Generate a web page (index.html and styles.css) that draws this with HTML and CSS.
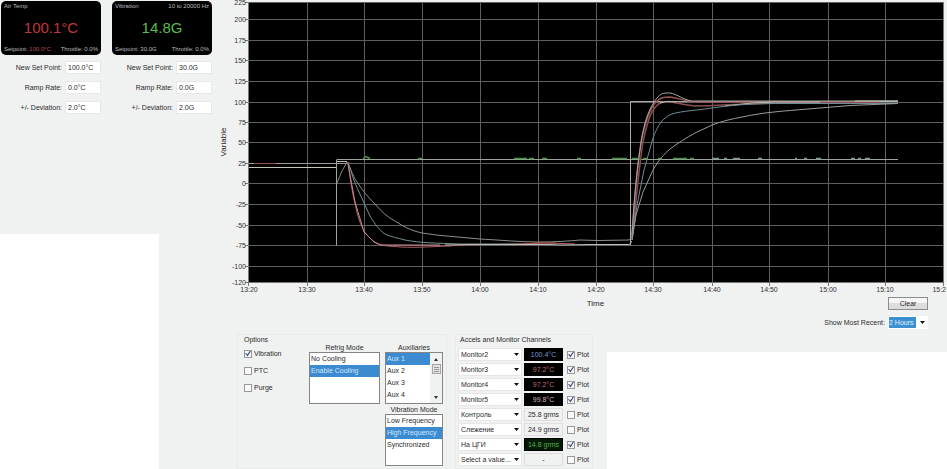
FILE: index.html
```html
<!DOCTYPE html>
<html lang="en">
<head>
<meta charset="utf-8">
<title>Chamber monitor</title>
<link rel="stylesheet" href="styles.css">
</head>
<body>
<main class="monitor">
  <div class="top">
    <aside class="readouts">
      <section class="readout">
        <div class="display display-red">
          <div class="line"><span>Air Temp</span></div>
          <div class="value">100.1°C</div>
          <div class="line"><span>Setpoint: <em>100.0°C</em></span><span>Throttle: 0.0%</span></div>
        </div>
        <div class="field"><label for="t1">New Set Point:</label><input id="t1" value="100.0°C"></div>
        <div class="field"><label for="t2">Ramp Rate:</label><input id="t2" value="0.0°C"></div>
        <div class="field"><label for="t3">+/- Deviation:</label><input id="t3" value="2.0°C"></div>
      </section>
      <section class="readout">
        <div class="display display-green">
          <div class="line"><span>Vibration</span><span>10 to 20000 Hz</span></div>
          <div class="value">14.8G</div>
          <div class="line"><span>Setpoint: 30.0G</span><span>Throttle: 0.0%</span></div>
        </div>
        <div class="field"><label for="v1">New Set Point:</label><input id="v1" value="30.0G"></div>
        <div class="field"><label for="v2">Ramp Rate:</label><input id="v2" value="0.0G"></div>
        <div class="field"><label for="v3">+/- Deviation:</label><input id="v3" value="2.0G"></div>
      </section>
    </aside>
    <section class="trend">
      <svg class="chart" viewBox="217 0 730 294" role="img" aria-label="Variable over time">
        <rect x="249" y="2" width="694" height="280" fill="#000"/>
        <path class="grid" d="M249 2.5H943M249 19.5H943M249 40.5H943M249 60.5H943M249 81.5H943M249 102.5H943M249 122.5H943M249 142.5H943M249 163.5H943M249 183.5H943M249 204.5H943M249 225.5H943M249 245.5H943M249 266.5H943"/>
        <path class="grid" d="M307.500 2V282M364.500 2V282M422.500 2V282M480.500 2V282M538.500 2V282M596.500 2V282M653.500 2V282M712.500 2V282M769.500 2V282M828.500 2V282M885.500 2V282"/>
        <path class="axis" d="M248.500 2V282.500H943.500V2"/>
        <path class="axis" d="M245 2.500h4M245 19.500h4M245 40.500h4M245 60.500h4M245 81.500h4M245 102.500h4M245 122.500h4M245 142.500h4M245 163.500h4M245 183.500h4M245 204.500h4M245 225.500h4M245 245.500h4M245 266.500h4M245 282.500h4M248.500 282v4M307.500 282v4M364.500 282v4M422.500 282v4M480.500 282v4M538.500 282v4M596.500 282v4M653.500 282v4M712.500 282v4M769.500 282v4M828.500 282v4M885.500 282v4M943.500 282v4"/>
        <path class="trace" stroke="#a49a98" d="M249 163.500H347"/>
        <path class="trace" stroke="#8d5550" d="M254 163.500H276"/>
        <path class="trace" stroke="#c4c6b4" d="M249 167.500H336.500V161.500H347"/>
        <path class="trace" stroke="#9ba59e" d="M336.500 160V245.500M336.500 159.500H898"/>
        <path class="trace" stroke="#7d8876" d="M337 183L342 171L347 162"/>
        <path class="trace" stroke="#8c8e8e" d="M347 162C350 166 352 175 357 182C363 191 368 197 375 204C381 211 387 217 395 221C404 227 412 231 422 233C440 236 460 237 480 239C500 240 520 242 538 242C555 242 570 241 580 240L598 240.500L629 240Q632 239 632 235"/>
        <path class="trace" stroke="#71918b" d="M348 162C352 174 354 182 359 192L370 216C375 224 379 230 385 234C391 237 398 238 405 240C420 243 435 243 460 244H540"/>
        <path class="trace" stroke="#b35e66" d="M348 162C350 178 352 192 356 208C358 218 361 225 364 231C368 237 372 240 376 243C380 246 390 246 400 247C420 248 440 246 450 246C465 244 480 245 520 244L545 243L575 244"/>
        <path class="trace" stroke="#c98a91" d="M348 164L355 202L364 232L374 242L381 245H440"/>
        <path class="trace" stroke="#b9bcb9" d="M445 245L470 244.500H550L560 245L590 244.500H629Q631 244 631.500 241"/>
        <path class="trace" stroke="#a65550" d="M534 243H556"/>
        <path class="trace" stroke="#a9acab" d="M630.500 245V101.500H898"/>
        <path class="trace wide" stroke="#985450" d="M632 235C634 205 637 169 641 142C645 122 649 111 655 103C660 97 665 97 670 97C680 98 684 102 700 102H880"/>
        <path class="trace wide" stroke="#8a4f4d" d="M632 240C635 212 638 174 643 142C648 118 652 108 660 103C670 99 678 105 695 106C720 106 745 103 790 103H882"/>
        <path class="trace" stroke="#a7a8a9" d="M632 235C634 205 636 175 640 150C643 128 646 115 654 102C658 96 661 93 666 93C676 92 680 99 692 101H898"/>
        <path class="trace" stroke="#bfc3b2" d="M660 103Q667 100 676 102M725 106L752 103L775 102H820M855 101H898"/>
        <path class="trace" stroke="#6e8b98" d="M632 240L637 205L644 170L653 138C658 125 662 118 672 114C681 111 700 110 712 108C730 105 750 104 770 103.500H898"/>
        <path class="trace" stroke="#9a9c9b" d="M632 240L636 215L643 192L653 170C658 161 664 154 670 149C678 143 686 138 695 133L712 125C722 121 732 119 742 117C765 112 785 111 808 109L850 105.500L898 103.500"/>
        <path class="signal" d="M363 158.500l3 -2l4 2M418 158.500h4M514 158.500h13M529 158.500h5M542 158.500h5M577 158.500h4M612 158.500h15M632 158.500h6M643 158.500h5M658 158.500h4M673 158.500h14M690 158.500h4"/>
        <path class="signal pale" d="M712 158.500h7M724 158.500h3M733 158.500h7M758 158.500h4M795 158.500h2M804 158.500h3M816 158.500h5M851 158.500h4M858 158.500h3M865 158.500h5"/>
        <g class="ticks" text-anchor="end">
          <text x="246" y="5">225</text><text x="246" y="22">200</text><text x="246" y="43">175</text><text x="246" y="63">150</text><text x="246" y="84">125</text><text x="246" y="105">100</text><text x="246" y="125">75</text><text x="246" y="145">50</text><text x="246" y="166">25</text><text x="246" y="186">0</text><text x="246" y="207">-25</text><text x="246" y="228">-50</text><text x="246" y="248">-75</text><text x="246" y="269">-100</text><text x="246" y="285">-120</text>
        </g>
        <g class="ticks" text-anchor="middle">
          <text x="249" y="292">13:20</text><text x="307" y="292">13:30</text><text x="364" y="292">13:40</text><text x="422" y="292">13:50</text><text x="480" y="292">14:00</text><text x="538" y="292">14:10</text><text x="596" y="292">14:20</text><text x="653" y="292">14:30</text><text x="712" y="292">14:40</text><text x="769" y="292">14:50</text><text x="828" y="292">15:00</text><text x="885" y="292">15:10</text><text x="946" y="292" text-anchor="end">15:2</text>
        </g>
        <text class="axis-title" transform="translate(226 142) rotate(-90)" text-anchor="middle">Variable</text>
      </svg>
      <div class="under">
        <span class="time">Time</span>
        <button class="clear" type="button">Clear</button>
      </div>
      <div class="recent">
        <label for="span">Show Most Recent:</label>
        <span class="combo range"><select id="span"><option>2 Hours</option></select></span>
      </div>
    </section>
  </div>

  <div class="panels">
    <fieldset class="options">
      <legend>Options</legend>
      <div class="option-columns">
        <div class="checks">
          <label><input type="checkbox" checked>Vibration</label>
          <label><input type="checkbox">PTC</label>
          <label><input type="checkbox">Purge</label>
        </div>
        <div class="lists">
          <label for="refrig">Refrig Mode</label>
          <select id="refrig" class="list" size="4"><option>No Cooling</option><option selected>Enable Cooling</option></select>
        </div>
        <div class="lists">
          <label for="aux">Auxiliaries</label>
          <div class="scroller">
            <select id="aux" class="list" size="4"><option selected>Aux 1</option><option>Aux 2</option><option>Aux 3</option><option>Aux 4</option></select>
            <svg class="scroll" viewBox="0 0 12 50" aria-hidden="true"><rect width="12" height="50" fill="#f0f1f1"/><path d="M4 8L6 5L8 8ZM4 43L6 46L8 43Z" fill="#333"/><rect x="2.500" y="11.500" width="8" height="9" fill="#e3e3e3" stroke="#a6a6a6"/><path d="M4 14.500h5M4 16.500h5M4 18.500h5" stroke="#999"/></svg>
          </div>
          <label for="mode">Vibration Mode</label>
          <select id="mode" class="list" size="4"><option>Low Frequency</option><option selected>High Frequency</option><option>Synchronized</option></select>
        </div>
      </div>
    </fieldset>
    <fieldset class="channels">
      <legend>Accels and Monitor Channels</legend>
      <div class="channel"><span class="combo"><select aria-label="Channel 1"><option>Monitor2</option></select></span><output class="lit blue">100.4°C</output><label><input type="checkbox" checked>Plot</label></div>
      <div class="channel"><span class="combo"><select aria-label="Channel 2"><option>Monitor3</option></select></span><output class="lit red">97.2°C</output><label><input type="checkbox" checked>Plot</label></div>
      <div class="channel"><span class="combo"><select aria-label="Channel 3"><option>Monitor4</option></select></span><output class="lit red">97.2°C</output><label><input type="checkbox" checked>Plot</label></div>
      <div class="channel"><span class="combo"><select aria-label="Channel 4"><option>Monitor5</option></select></span><output class="lit pink">99.8°C</output><label><input type="checkbox" checked>Plot</label></div>
      <div class="channel"><span class="combo"><select aria-label="Channel 5"><option>Контроль</option></select></span><output>25.8 grms</output><label><input type="checkbox">Plot</label></div>
      <div class="channel"><span class="combo"><select aria-label="Channel 6"><option>Слежение</option></select></span><output>24.9 grms</output><label><input type="checkbox">Plot</label></div>
      <div class="channel"><span class="combo"><select aria-label="Channel 7"><option>На ЦГИ</option></select></span><output class="lit green">14.8 grms</output><label><input type="checkbox" checked>Plot</label></div>
      <div class="channel"><span class="combo"><select aria-label="Channel 8"><option>Select a value...</option></select></span><output>-</output><label><input type="checkbox">Plot</label></div>
    </fieldset>
  </div>
</main>
</body>
</html>
```
FILE: styles.css
```css
* { box-sizing: border-box; }

body {
  margin: 0;
  min-height: 100vh;
  font: 7px/9px "Liberation Sans", Arial, sans-serif;
  color: #2b2b2b;
  background:
    linear-gradient(#fff, #fff) 0 234px / 159px 100% no-repeat,
    linear-gradient(#fff, #fff) 607px 352px / 100% 100% no-repeat,
    #f0f1f1;
}

input, select, button, output { font: inherit; color: inherit; }
em { font-style: normal; }

.top { display: flex; }
.readouts { display: flex; gap: 11px; flex: none; width: 217px; padding: 1px 5px 0 1px; }
.readout { flex: 1; }

.display {
  display: flex;
  flex-direction: column;
  justify-content: space-between;
  height: 54px;
  margin-bottom: 6px;
  padding: 1px 3px;
  border-radius: 5px;
  background: #000;
  color: #bdbdbd;
  font-size: 6px;
}
.line { display: flex; justify-content: space-between; white-space: nowrap; }
.line em { color: #b3524f; }
.value { text-align: center; font-size: 15px; line-height: 18px; }
.display-red .value { color: #c23836; }
.display-green .value { color: #5abb4e; }

.field { display: flex; align-items: center; justify-content: flex-end; gap: 3px; margin-bottom: 7px; }
.field input {
  width: 36px;
  height: 13px;
  padding: 0 2px;
  border: 1px solid #e8e8e8;
  background: #fff;
}

.trend { flex: 1; min-width: 0; }
.chart { display: block; width: 100%; }
.grid { fill: none; stroke: #5f5f5f; }
.axis { fill: none; stroke: #777; }
.trace { fill: none; stroke-width: 1; }
.wide { stroke-width: 1.500; }
.signal { fill: none; stroke: #4c9248; stroke-width: 1.500; }
.pale { stroke: #7f9a8b; }
.ticks { font-size: 7px; fill: #333; }
.axis-title { font-size: 8px; fill: #222; }

.under { display: grid; grid-template-columns: 1fr auto 1fr; align-items: center; padding: 3px 19px 0 46px; }
.time { grid-column: 2; font-size: 8px; }
.clear {
  justify-self: end;
  width: 40px;
  height: 13px;
  padding: 0;
  border: 1px solid #8c8c8c;
  background: linear-gradient(#f6f6f6 50%, #dcdcdc 50%);
}
.recent { display: flex; justify-content: flex-end; align-items: center; gap: 3px; padding: 6px 19px 5px 0; }

.combo { position: relative; display: block; height: 13px; background: #fff; }
.combo::after {
  content: "";
  position: absolute;
  right: 3px;
  top: 5px;
  width: 5px;
  height: 3px;
  background: #111;
  clip-path: polygon(0 0, 100% 0, 50% 100%);
  pointer-events: none;
}
.combo select {
  appearance: none;
  display: block;
  width: 100%;
  height: 100%;
  padding: 0 2px;
  border: 1px solid #e6e6e6;
  border-radius: 0;
  background: none;
}
.range { width: 40px; padding: 1px 12px 1px 1px; }
.range select { padding: 0; border: 0; background: #3c8fd1; color: #e4f2ff; }

.panels { display: flex; gap: 8px; padding-left: 237px; }
fieldset { margin: 0; padding: 0; border: 1px solid #e9eaea; min-width: 0; }
legend { float: left; width: 100%; padding: 0; }

.options { width: 210px; padding: 0 3px 0 6px; }
.options legend { height: 8px; }
.option-columns { display: grid; grid-template-columns: 60px 71px 58px; column-gap: 5px; clear: both; }
.checks { display: flex; flex-direction: column; gap: 8px; padding-top: 6px; }
.checks label, .channel label { display: flex; align-items: center; gap: 2px; }
.lists { display: flex; flex-direction: column; }
.lists label { text-align: center; line-height: 9px; }
.list {
  appearance: none;
  display: block;
  width: 100%;
  height: 52px;
  padding: 0;
  overflow: hidden;
  scrollbar-width: none;
  border: 1px solid #858585;
  border-radius: 0;
  background: #fff;
}
.list option { min-height: 0; height: 12px; padding: 2px 1px 0; line-height: 9px; }
.list option:checked { background: linear-gradient(#3c8ad0, #3c8ad0); color: #cfe9ff; }
.scroller { display: flex; height: 52px; margin-bottom: 1px; border: 1px solid #858585; }
.scroller .list { flex: 1; min-width: 0; height: 50px; border: 0; }
.scroll { display: block; flex: none; width: 12px; height: 50px; }

input[type="checkbox"] {
  appearance: none;
  display: grid;
  place-items: center;
  flex: none;
  width: 8px;
  height: 8px;
  margin: 0;
  border: 1px solid #999;
  background: #f8f8f8;
}
input[type="checkbox"]:checked::before {
  content: "";
  width: 6px;
  height: 6px;
  background: #3f4c80;
  clip-path: polygon(0 45%, 18% 40%, 38% 68%, 85% 0, 100% 10%, 42% 100%);
}

.channels { width: 138px; padding: 0 2px; }
.channels legend { height: 13px; padding-left: 2px; }
.channel { display: grid; grid-template-columns: 64px 39px 1fr; gap: 2px; align-items: center; margin-bottom: 2px; clear: both; }
.channel label { padding-left: 2px; }
.channel output { height: 13px; border: 1px solid #dedede; text-align: center; line-height: 12px; white-space: nowrap; }
.channel .lit { border-color: #000; background: #000; }
.channel .blue { color: #6f9ed0; }
.channel .red { color: #b96e6c; }
.channel .pink { color: #cdb4b8; }
.channel .green { color: #5cae55; background: #031a05; }
```
